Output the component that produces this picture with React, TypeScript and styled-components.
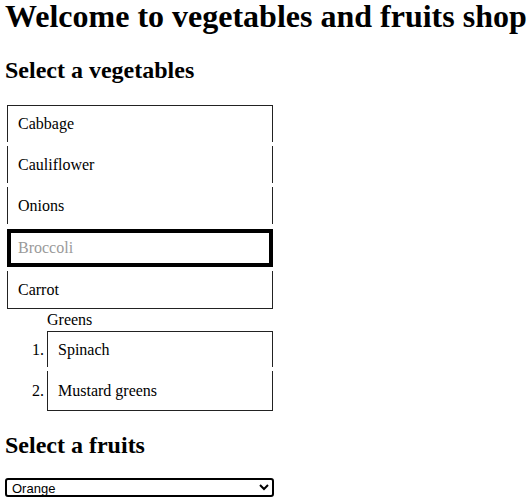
import React from "react";
import styled, { createGlobalStyle } from "styled-components";

const GlobalStyle = createGlobalStyle`
  body {
    margin: 0;
    background: #fff;
    font-family: "Liberation Serif", "Times New Roman", serif;
    color: #000;
  }
`;

const Page = styled.div`
  padding: 0 0 0 5px;
`;

const Title = styled.h1`
  font-size: 32px;
  font-weight: bold;
  line-height: 32px;
  margin: 0;
  white-space: nowrap;
`;

const Heading = styled.h2<{ $top: number }>`
  font-size: 24px;
  font-weight: bold;
  line-height: 28px;
  margin: ${(p) => p.$top}px 0 0;
`;

const List = styled.ul`
  list-style: none;
  margin: 21px 0 0;
  padding: 0 0 0 2px;
  width: 266px;
`;

type BoxProps = {
  $h: number;
  $gap?: number;
  $top?: boolean;
  $bottom?: boolean;
};

const Item = styled.li<BoxProps>`
  box-sizing: border-box;
  height: ${(p) => p.$h}px;
  margin-top: ${(p) => p.$gap ?? 0}px;
  border-left: 1px solid #222;
  border-right: 1px solid #222;
  border-top: ${(p) => (p.$top ? "1px solid #222" : "none")};
  border-bottom: ${(p) => (p.$bottom ? "1px solid #222" : "none")};
  padding-left: 10px;
  display: flex;
  align-items: center;
  font-size: 16px;
`;

const SelectedItem = styled.li`
  box-sizing: border-box;
  height: 38px;
  margin-top: 5px;
  border: 4px solid #000;
  padding-left: 7px;
  display: flex;
  align-items: center;
  font-size: 16px;
  color: #9a9a9a;
`;

const Group = styled.li`
  padding-left: 40px;
`;

const GroupLabel = styled.div`
  font-size: 16px;
  line-height: 22px;
`;

const Numbered = styled.ol`
  margin: 0;
  padding: 0;
  list-style: none;
  counter-reset: n;
`;

const NumItem = styled(Item)`
  position: relative;
  counter-increment: n;
  &::before {
    content: counter(n) ".";
    position: absolute;
    left: -16px;
  }
`;

const FruitSelect = styled.select`
  margin-top: 19px;
  width: 269px;
  height: 19px;
  font-family: "Liberation Sans", Arial, sans-serif;
  font-size: 13px;
  border: 2px solid #000;
  border-radius: 3px;
  background: #fff;
  color: #000;
  padding: 0 0 0 1px;
`;

export default function App() {
  return (
    <Page>
      <GlobalStyle />
      <Title>Welcome to vegetables and fruits shop</Title>
      <Heading $top={24}>Select a vegetables</Heading>
      <List>
        <Item $h={37} $top>
          Cabbage
        </Item>
        <Item $h={37} $gap={4}>
          Cauliflower
        </Item>
        <Item $h={37} $gap={4}>
          Onions
        </Item>
        <SelectedItem>Broccoli</SelectedItem>
        <Item $h={38} $gap={4} $bottom>
          Carrot
        </Item>
        <Group>
          <GroupLabel>Greens</GroupLabel>
          <Numbered>
            <NumItem $h={36} $top>
              Spinach
            </NumItem>
            <NumItem $h={40} $gap={4} $bottom>
              Mustard greens
            </NumItem>
          </Numbered>
        </Group>
      </List>
      <Heading $top={20}>Select a fruits</Heading>
      <FruitSelect defaultValue="Orange">
        <option>Apple</option>
        <option>Orange</option>
        <option>Banana</option>
      </FruitSelect>
    </Page>
  );
}
